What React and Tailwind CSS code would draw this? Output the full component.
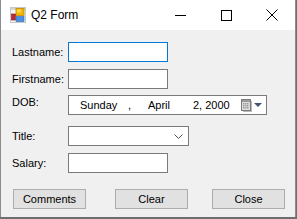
import React from "react";

const font = { fontFamily: '"Liberation Sans", Arial, sans-serif' };

const FormIcon = () => (
    <svg width="16" height="16" viewBox="0 0 16 16">
        <rect x="0.5" y="0.5" width="15" height="15" fill="#f4f4f4" stroke="#c8c8c8" />
        <rect x="1" y="1" width="14" height="2" fill="#d6d6d6" />
        <rect x="6" y="1.5" width="8" height="7" fill="#f2b705" stroke="#c98a00" strokeWidth="0.8" />
        <rect x="7" y="2.5" width="4" height="3" fill="#ffd84a" />
        <rect x="1.5" y="7" width="4" height="6" fill="#c0282d" stroke="#8a1a1a" strokeWidth="0.6" />
        <rect x="6" y="9.5" width="8" height="5" fill="#4a90e2" stroke="#2a68b8" strokeWidth="0.6" />
    </svg>
);

const CalendarIcon = () => (
    <svg width="11" height="13" viewBox="0 0 11 13">
        <rect x="0.5" y="0.5" width="9" height="11" fill="#dcdcdc" stroke="#7c7c7c" />
        <rect x="1" y="1" width="8" height="2" fill="#9a9a9a" />
        {[4, 6, 8].map(y => [2, 4, 6].map(x => (
            <rect key={`${x}-${y}`} x={x} y={y} width="1.4" height="1.4" fill="#9c9c9c" />
        )))}
        <rect x="10" y="2" width="1" height="11" fill="#b8b8b8" />
        <rect x="2" y="12" width="9" height="1" fill="#b8b8b8" />
    </svg>
);

const Field = ({ label, children, top }) => (
    <div className={`flex ${top ? "items-start" : "items-center"} h-[20px]`}>
        <span className={`w-[56px] text-[11px] text-black leading-none ${top ? "pt-[2px]" : ""}`}>{label}</span>
        {children}
    </div>
);

const TextBox = ({ focused, w = "w-[100px]" }) => (
    <div className={`${w} h-[20px] bg-white border ${focused ? "border-[#0078d7]" : "border-[#7a7a7a]"}`}></div>
);

const Button = ({ children, className = "" }) => (
    <button className={`w-[73px] h-[20px] bg-[#e1e1e1] border border-[#adadad] text-[11px] text-black leading-none flex items-center justify-center ${className}`}>
        {children}
    </button>
);

export default function App() {
    return (
        <div className="w-[297px] h-[219px] bg-[#6e6e6e]" style={font}>
            <div className="w-[296px] h-[217px] bg-[#f0f0f0] border-l border-r border-[#8c8c8c] flex flex-col">
                <div className="h-[30px] bg-white flex items-center shrink-0">
                    <div className="ml-[9px] flex"><FormIcon /></div>
                    <span className="ml-[5px] text-[12px] text-black">Q2 Form</span>
                    <div className="ml-auto flex items-center">
                        <div className="w-[46px] h-[30px] flex items-center justify-center">
                            <div className="w-[11px] h-px bg-black"></div>
                        </div>
                        <div className="w-[46px] h-[30px] flex items-center justify-center">
                            <div className="w-[11px] h-[11px] border border-black"></div>
                        </div>
                        <div className="w-[46px] h-[30px] flex items-center justify-center">
                            <svg width="12" height="12" viewBox="0 0 12 12">
                                <path d="M0.5 0.5 L11.5 11.5 M11.5 0.5 L0.5 11.5" stroke="black" strokeWidth="1" />
                            </svg>
                        </div>
                    </div>
                </div>

                <div className="flex flex-col pl-[11px] pt-[12px]">
                    <Field label="Lastname:"><TextBox focused /></Field>
                    <div className="h-[7px]"></div>
                    <Field label="Firstname:"><TextBox /></Field>
                    <div className="h-[6px]"></div>
                    <Field label="DOB:" top>
                        <div className="w-[199px] h-[20px] bg-white border border-[#7a7a7a] flex items-center text-[11px] text-black leading-none whitespace-nowrap">
                            <span className="ml-[11px] w-[48px]">Sunday</span>
                            <span className="w-[20px]">,</span>
                            <span className="w-[45px]">April</span>
                            <span className="w-[48px]">2, 2000</span>
                            <div className="flex items-center">
                                <CalendarIcon />
                                <svg width="8" height="5" viewBox="0 0 8 5" className="ml-[2px]">
                                    <path d="M0 0 H8 L4 4 Z" fill="#44546a" />
                                </svg>
                            </div>
                        </div>
                    </Field>
                    <div className="h-[11px]"></div>
                    <Field label="Title:">
                        <div className="w-[121px] h-[20px] bg-white border border-[#7a7a7a] flex items-center justify-end pr-[5px]">
                            <svg width="9" height="5" viewBox="0 0 9 5">
                                <path d="M0.5 0.5 L4.5 4.5 L8.5 0.5" fill="none" stroke="#505050" strokeWidth="1" />
                            </svg>
                        </div>
                    </Field>
                    <div className="h-[7px]"></div>
                    <Field label="Salary:"><TextBox /></Field>
                </div>

                <div className="flex items-center pl-[12px] mt-[16px]">
                    <Button>Comments</Button>
                    <Button className="ml-[29px]">Clear</Button>
                    <Button className="ml-[24px]">Close</Button>
                </div>
            </div>
        </div>
    );
}
